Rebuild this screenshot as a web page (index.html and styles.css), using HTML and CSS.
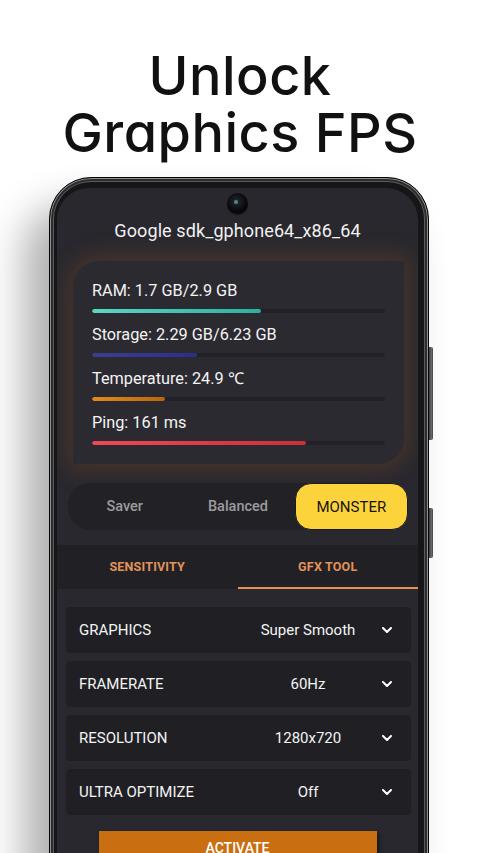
FILE: index.html
```html
<!DOCTYPE html>
<html lang="en">
<head>
<meta charset="utf-8">
<title>Unlock Graphics FPS</title>
<link rel="stylesheet" href="styles.css">
</head>
<body>
<div class="page">
  <h1 class="title">Unlock<br>Graphics FPS</h1>
  <div class="phone">
    <span class="side-btn btn-a"></span>
    <span class="side-btn btn-b"></span>
    <div class="screen">
      <div class="camera"><span class="lens"></span></div>
      <div class="device">Google sdk_gphone64_x86_64</div>

      <div class="stats">
        <div class="stat">
          <div class="stat-label">RAM: 1.7 GB/2.9 GB</div>
          <div class="track"><div class="fill fill-ram" style="width:57.7%"></div></div>
        </div>
        <div class="stat">
          <div class="stat-label">Storage: 2.29 GB/6.23 GB</div>
          <div class="track"><div class="fill fill-storage" style="width:36%"></div></div>
        </div>
        <div class="stat">
          <div class="stat-label">Temperature: 24.9 ℃</div>
          <div class="track"><div class="fill fill-temp" style="width:25%"></div></div>
        </div>
        <div class="stat">
          <div class="stat-label">Ping: 161 ms</div>
          <div class="track"><div class="fill fill-ping" style="width:73%"></div></div>
        </div>
      </div>

      <div class="modes">
        <div class="mode">Saver</div>
        <div class="mode">Balanced</div>
        <div class="mode mode-active">MONSTER</div>
      </div>

      <div class="tabs">
        <div class="tab">SENSITIVITY</div>
        <div class="tab tab-active">GFX TOOL</div>
      </div>

      <div class="rows">
        <div class="row">
          <span class="row-label">GRAPHICS</span>
          <span class="row-value">Super Smooth</span>
          <svg class="chev" viewBox="0 0 10 6"><path d="M1 1 L5 5 L9 1" /></svg>
        </div>
        <div class="row">
          <span class="row-label">FRAMERATE</span>
          <span class="row-value">60Hz</span>
          <svg class="chev" viewBox="0 0 10 6"><path d="M1 1 L5 5 L9 1" /></svg>
        </div>
        <div class="row">
          <span class="row-label">RESOLUTION</span>
          <span class="row-value">1280x720</span>
          <svg class="chev" viewBox="0 0 10 6"><path d="M1 1 L5 5 L9 1" /></svg>
        </div>
        <div class="row">
          <span class="row-label">ULTRA OPTIMIZE</span>
          <span class="row-value">Off</span>
          <svg class="chev" viewBox="0 0 10 6"><path d="M1 1 L5 5 L9 1" /></svg>
        </div>
      </div>

      <div class="activate">ACTIVATE</div>
    </div>
  </div>
</div>
</body>
</html>
```

FILE: styles.css
```css
* { box-sizing: border-box; }

html, body {
  margin: 0;
  padding: 0;
  background: #ffffff;
}

.page {
  width: 480px;
  height: 853px;
  overflow: hidden;
  position: relative;
  background: #ffffff;
}

.title {
  margin: 0;
  padding-top: 47px;
  text-align: center;
  font-family: "Inter", "Open Sans", sans-serif;
  font-weight: 500;
  font-size: 54px;
  line-height: 57px;
  color: #111111;
  letter-spacing: 0.5px;
  font-feature-settings: "cv11" 1;
}

.phone {
  position: relative;
  margin: 16px 0 0 49px;
  width: 380px;
  height: 760px;
  border-radius: 42px;
  background: #161618;
  border: 1px solid #050505;
  box-shadow:
    inset 0 0 0 1px #8e8e90,
    inset 0 0 0 3px #2c2c2e,
    inset 0 0 0 4px #5a5a5c,
    -24px 30px 42px rgba(0, 0, 0, 0.32);
  padding: 10px 10px 0 7px;
}

.side-btn {
  position: absolute;
  right: -5px;
  width: 4px;
  border-radius: 0 2px 2px 0;
  background: linear-gradient(90deg, #3a3a3c, #6a6a6c 60%, #444446);
}
.btn-a { top: 169px; height: 93px; }
.btn-b { top: 330px; height: 50px; }

.screen {
  height: 100%;
  border-radius: 32px 32px 0 0;
  background: #29282e;
  display: flex;
  flex-direction: column;
  align-items: center;
  font-family: "Roboto", "Liberation Sans", sans-serif;
  color: #ffffff;
  overflow: hidden;
}

.camera {
  margin-top: 5px;
  width: 21px;
  height: 21px;
  border-radius: 50%;
  background: radial-gradient(circle at 45% 40%, #1f2a30 0%, #0a0a0c 55%, #000 100%);
  box-shadow: 0 1px 1px rgba(0,0,0,0.6);
  position: relative;
}
.lens {
  position: absolute;
  left: 7px;
  top: 7px;
  width: 4px;
  height: 4px;
  border-radius: 50%;
  background: #5fa0a8;
  opacity: 0.8;
}

.device {
  margin-top: 6px;
  font-size: 18px;
  line-height: 22px;
  letter-spacing: 0.1px;
  color: #f2f2f2;
}

.stats {
  align-self: stretch;
  margin: 19px 14px 0 16px;
  padding: 20px 19px 19px 19px;
  background: #2b2a30;
  border-radius: 26px 0 26px 0;
  box-shadow: 0 0 22px 6px rgba(150, 85, 35, 0.28);
  display: flex;
  flex-direction: column;
  gap: 12px;
}

.stat-label {
  font-size: 16.3px;
  line-height: 19px;
  color: #f4f4f4;
}

.track {
  margin-top: 9px;
  height: 4px;
  border-radius: 2px;
  background: #222127;
  overflow: hidden;
}
.fill { height: 100%; border-radius: 2px; }
.fill-ram { background: linear-gradient(90deg, #5cd6c3, #2fae9f); }
.fill-storage { background: linear-gradient(90deg, #3b3f8f, #2b2f8a); }
.fill-temp { background: linear-gradient(90deg, #e18b1d, #b8660f); }
.fill-ping { background: linear-gradient(90deg, #ee4a55, #cc2f38); }

.modes {
  align-self: stretch;
  margin: 19px 10px 0 11px;
  height: 47px;
  border-radius: 22px;
  background: #222226;
  display: grid;
  grid-template-columns: 1fr 1fr 1fr;
}
.mode {
  display: flex;
  align-items: center;
  justify-content: center;
  font-size: 14.5px;
  font-weight: 500;
  color: #9b9b9f;
}
.mode-active {
  background: #fdd33c;
  color: #141414;
  border-radius: 16px;
  border: 1px solid #1a1a2a;
  font-weight: 400;
  font-size: 15px;
}

.tabs {
  align-self: stretch;
  margin-top: 15px;
  display: grid;
  grid-template-columns: 1fr 1fr;
  background: #202025;
}
.tab {
  height: 44px;
  display: flex;
  align-items: center;
  justify-content: center;
  font-size: 12.5px;
  font-weight: 700;
  letter-spacing: 0.2px;
  color: #e3935a;
  border-bottom: 2px solid transparent;
}
.tab-active {
  border-bottom-color: #e3935a;
}

.rows {
  align-self: stretch;
  margin: 18px 7px 0 9px;
  display: flex;
  flex-direction: column;
  gap: 8px;
}
.row {
  height: 46px;
  background: #202024;
  border-radius: 4px;
  display: grid;
  grid-template-columns: 1fr 140px 10px;
  column-gap: 4px;
  align-items: center;
  padding: 0 19px 0 13px;
  font-size: 15px;
  color: #f4f4f4;
}
.row-value { text-align: center; }
.chev {
  width: 10px;
  height: 6px;
  fill: none;
  stroke: #ffffff;
  stroke-width: 2;
  stroke-linecap: round;
  stroke-linejoin: round;
}

.activate {
  margin-top: 16px;
  width: 278px;
  height: 40px;
  padding-top: 8px;
  text-align: center;
  background: #c96f12;
  color: #ffffff;
  font-size: 14px;
  font-weight: 500;
  line-height: 18px;
  box-shadow: 2px 2px 4px rgba(0,0,0,0.45);
}
```
